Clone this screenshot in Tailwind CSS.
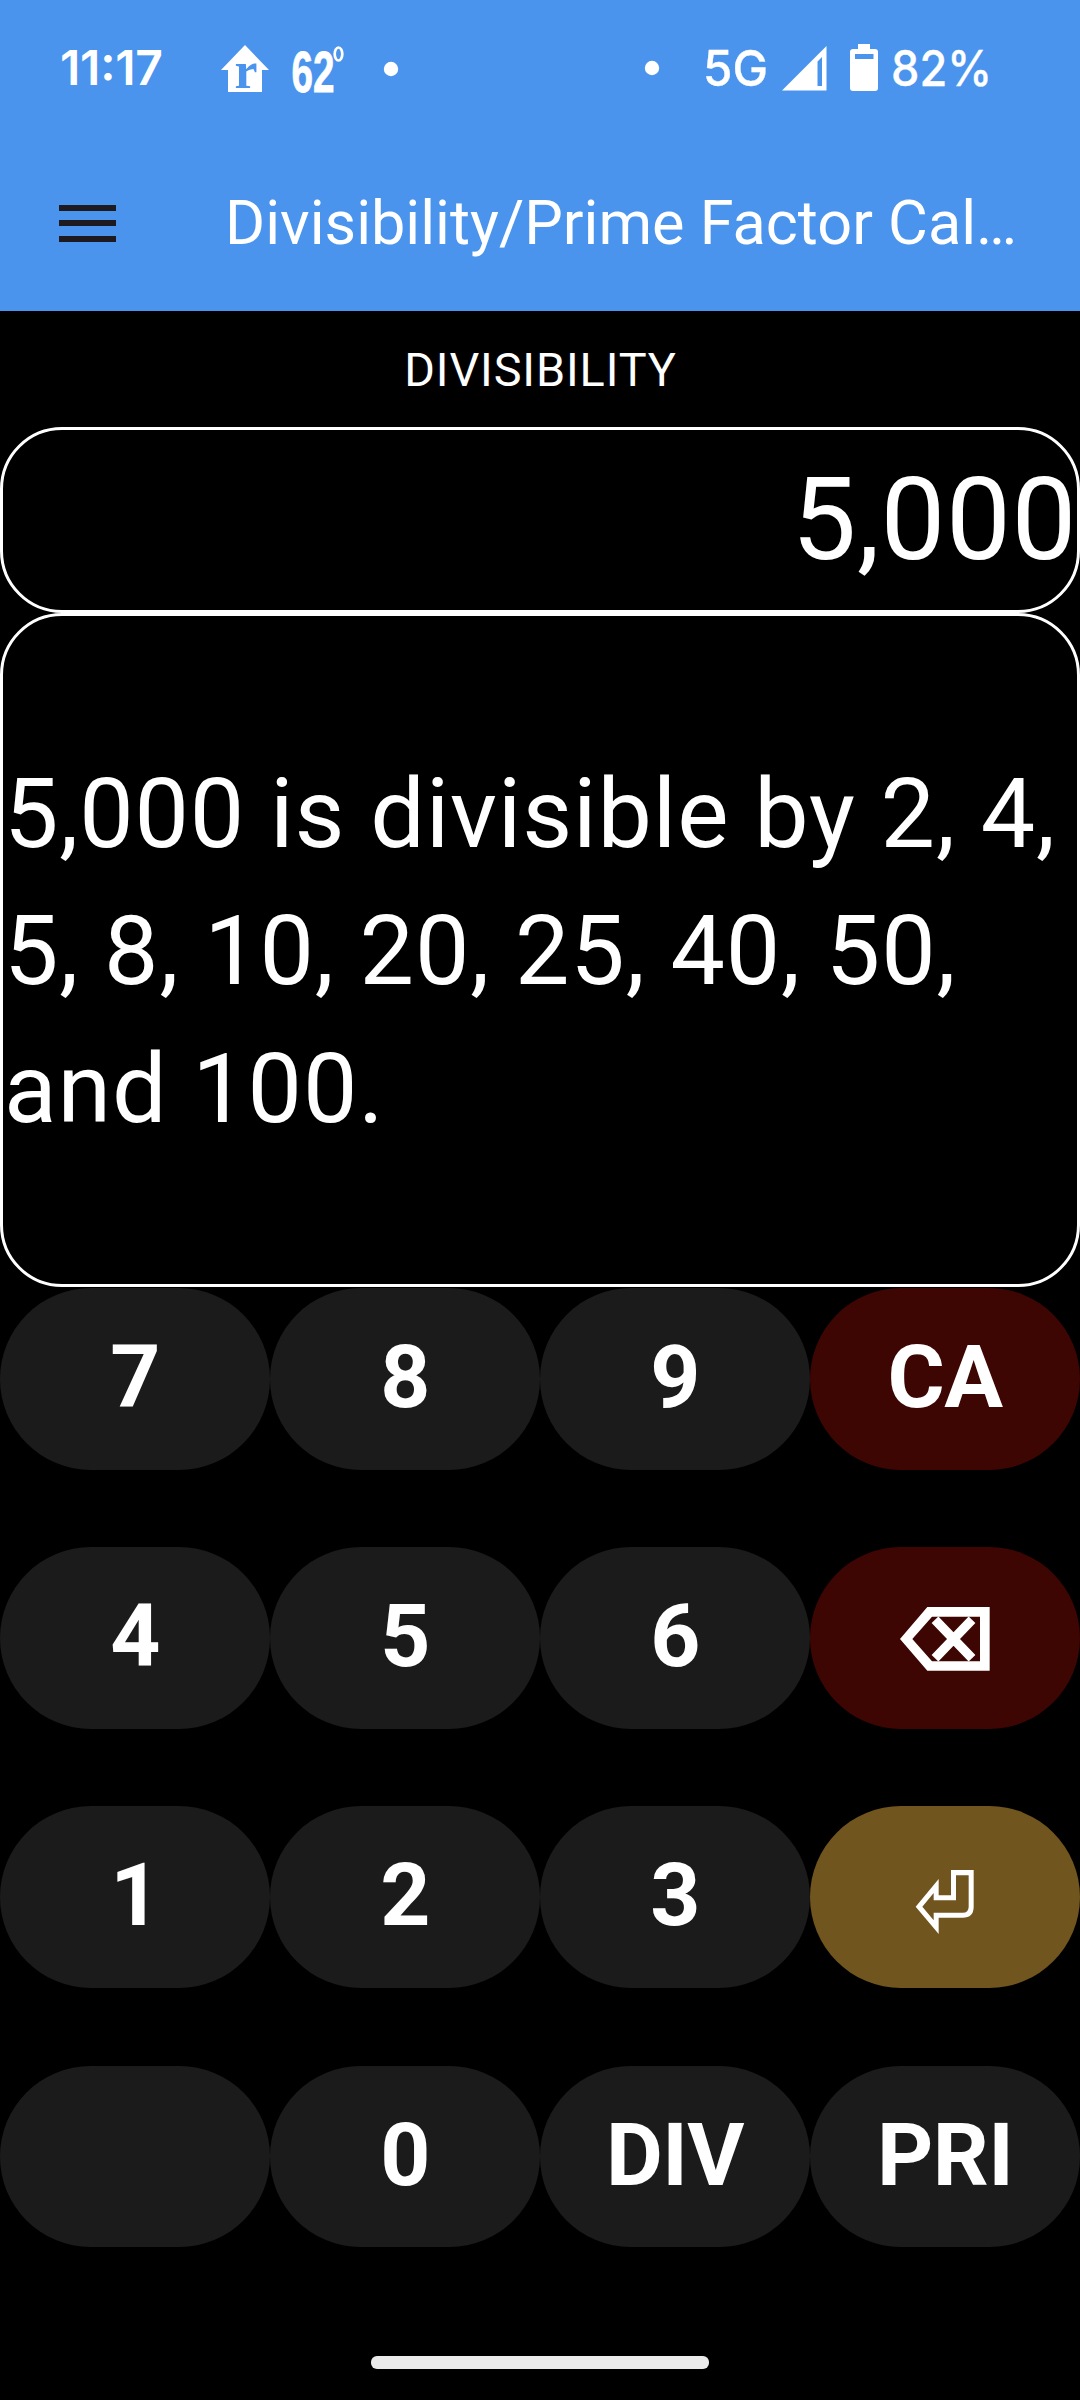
<!DOCTYPE html>
<html lang="en">
<head>
<meta charset="utf-8">
<title>Divisibility/Prime Factor Calculator</title>
<script src="https://cdn.jsdelivr.net/npm/@tailwindcss/browser@4"></script>
</head>
<body class="bg-black">
<div class="flex h-[2400px] w-[1080px] flex-col overflow-hidden bg-black font-['Roboto',sans-serif] text-white">
  <header class="flex h-[311px] shrink-0 flex-col bg-[#4a94ed]">
    <!-- Status bar -->
    <div class="flex h-[136px] items-center">
      <svg class="h-[136px] w-[540px] shrink-0" viewBox="0 0 540 136" fill="#fff">
        <text x="60" y="85" font-family="Inter" font-weight="600" font-size="48" textLength="103" lengthAdjust="spacing">11:17</text>
        <path d="M245 45L269 70H262V92H228V70H221Z"/>
        <text x="234.500" y="87.500" font-family="Liberation Serif" font-weight="700" font-size="52" fill="#4a94ed" textLength="23" lengthAdjust="spacingAndGlyphs">r</text>
        <text x="291.500" y="92" font-family="Liberation Sans" font-weight="700" font-size="58" textLength="43" lengthAdjust="spacingAndGlyphs" stroke="#fff" stroke-width=".8">62</text>
        <ellipse cx="338.500" cy="54" rx="3.800" ry="6.500" fill="none" stroke="#fff" stroke-width="2.700"/>
        <circle cx="391" cy="69" r="7.200"/>
      </svg>
      <svg class="h-[136px] w-[540px] shrink-0" viewBox="540 0 540 136" fill="#fff">
        <circle cx="652" cy="68" r="7.200"/>
        <text x="703" y="85.500" font-family="Inter" font-weight="500" font-size="49" textLength="65" lengthAdjust="spacingAndGlyphs" stroke="#fff" stroke-width=".3">5G</text>
        <path fill-rule="evenodd" d="M826.500 46V90.500H782ZM822 57L817.500 61.500V86H822Z"/>
        <path fill-rule="evenodd" d="M858 44H870V49H875Q878 49 878 52V88Q878 91 875 91H853Q850 91 850 88V52Q850 49 853 49H858ZM855 54V59H873.500V54Z"/>
        <text x="891" y="85.500" font-family="Inter" font-weight="500" font-size="49" textLength="101" lengthAdjust="spacingAndGlyphs" stroke="#fff" stroke-width=".3">82%</text>
      </svg>
    </div>
    <!-- App bar -->
    <div class="flex h-[175px] items-center pb-[1px]">
      <div class="ml-[59px] flex w-[57px] flex-col gap-[9.500px]">
        <span class="h-[6px] bg-[#1d1b20]"></span>
        <span class="h-[6px] bg-[#1d1b20]"></span>
        <span class="h-[6px] bg-[#1d1b20]"></span>
      </div>
      <h1 class="ml-[109px] whitespace-nowrap text-[61.200px] leading-[80px]">Divisibility/Prime Factor Cal…</h1>
    </div>
  </header>

  <div class="flex h-[116px] shrink-0 items-center justify-center pt-[2px] pl-[1px] text-[46.750px] tracking-[0.900px]">DIVISIBILITY</div>

  <div class="flex h-[186px] shrink-0 items-center justify-end rounded-[62px] border-[3px] border-white pb-[1px] text-[115.500px] leading-none tracking-[0.600px]">5,000</div>

  <div class="flex h-[674px] shrink-0 items-center rounded-[62px] border-[3px] border-white pl-[1px] pt-[4px] text-[96.900px] leading-[137.500px] tracking-[0.850px]">
    <p>5,000 is divisible by 2, 4,<br>5, 8, 10, 20, 25, 40, 50,<br>and 100.</p>
  </div>

  <!-- Keypad -->
  <main class="mt-[1px] grid shrink-0 grid-cols-4 gap-y-[77.700px] text-[87.500px] font-bold leading-none tracking-[-0.600px]">
    <button class="h-[181.500px] rounded-full bg-[#1b1b1b] pb-[2px]">7</button>
    <button class="h-[181.500px] rounded-full bg-[#1b1b1b] pb-[2px]">8</button>
    <button class="h-[181.500px] rounded-full bg-[#1b1b1b] pb-[2px]">9</button>
    <button class="h-[181.500px] rounded-full bg-[#3e0603] pb-[2px]">CA</button>
    <button class="h-[181.500px] rounded-full bg-[#1b1b1b] pb-[2px]">4</button>
    <button class="h-[181.500px] rounded-full bg-[#1b1b1b] pb-[2px]">5</button>
    <button class="h-[181.500px] rounded-full bg-[#1b1b1b] pb-[2px]">6</button>
    <button class="h-[181.500px] rounded-full bg-[#3e0603]" aria-label="Backspace">
      <svg class="h-[181.500px] w-[270px]" viewBox="30 51 810 544.500" fill="#fff">
        <path fill-rule="evenodd" d="M382 231H569V422H382L300 327ZM396 260L337 327L396 394H540V260Z"/>
        <path d="M405 269L516 385M516 269L405 385" stroke="#fff" stroke-width="28"/>
      </svg>
    </button>
    <button class="h-[181.500px] rounded-full bg-[#1b1b1b] pb-[2px]">1</button>
    <button class="h-[181.500px] rounded-full bg-[#1b1b1b] pb-[2px]">2</button>
    <button class="h-[181.500px] rounded-full bg-[#1b1b1b] pb-[2px]">3</button>
    <button class="h-[181.500px] rounded-full bg-[#70551f]" aria-label="Enter">
      <svg class="h-[181.500px] w-[270px]" viewBox="30 48 810 544.500" fill="#fff">
        <path fill-rule="evenodd" d="M347 350L416 267V316H453V240H521V350Q521 383 488 383H416V432ZM367 350L401 391V368H488Q506 368 506 350V256H468V331H401V309Z"/>
      </svg>
    </button>
    <button class="h-[181.500px] rounded-full bg-[#1b1b1b]" aria-label="Blank"></button>
    <button class="h-[181.500px] rounded-full bg-[#1b1b1b] pb-[2px]">0</button>
    <button class="h-[181.500px] rounded-full bg-[#1b1b1b] pb-[2px]">DIV</button>
    <button class="h-[181.500px] rounded-full bg-[#1b1b1b] pb-[2px]">PRI</button>
  </main>

  <div class="mx-auto mt-auto mb-[31px] h-[13px] w-[338px] shrink-0 rounded-[6px] bg-[#ebebeb]"></div>
</div>
</body>
</html>
